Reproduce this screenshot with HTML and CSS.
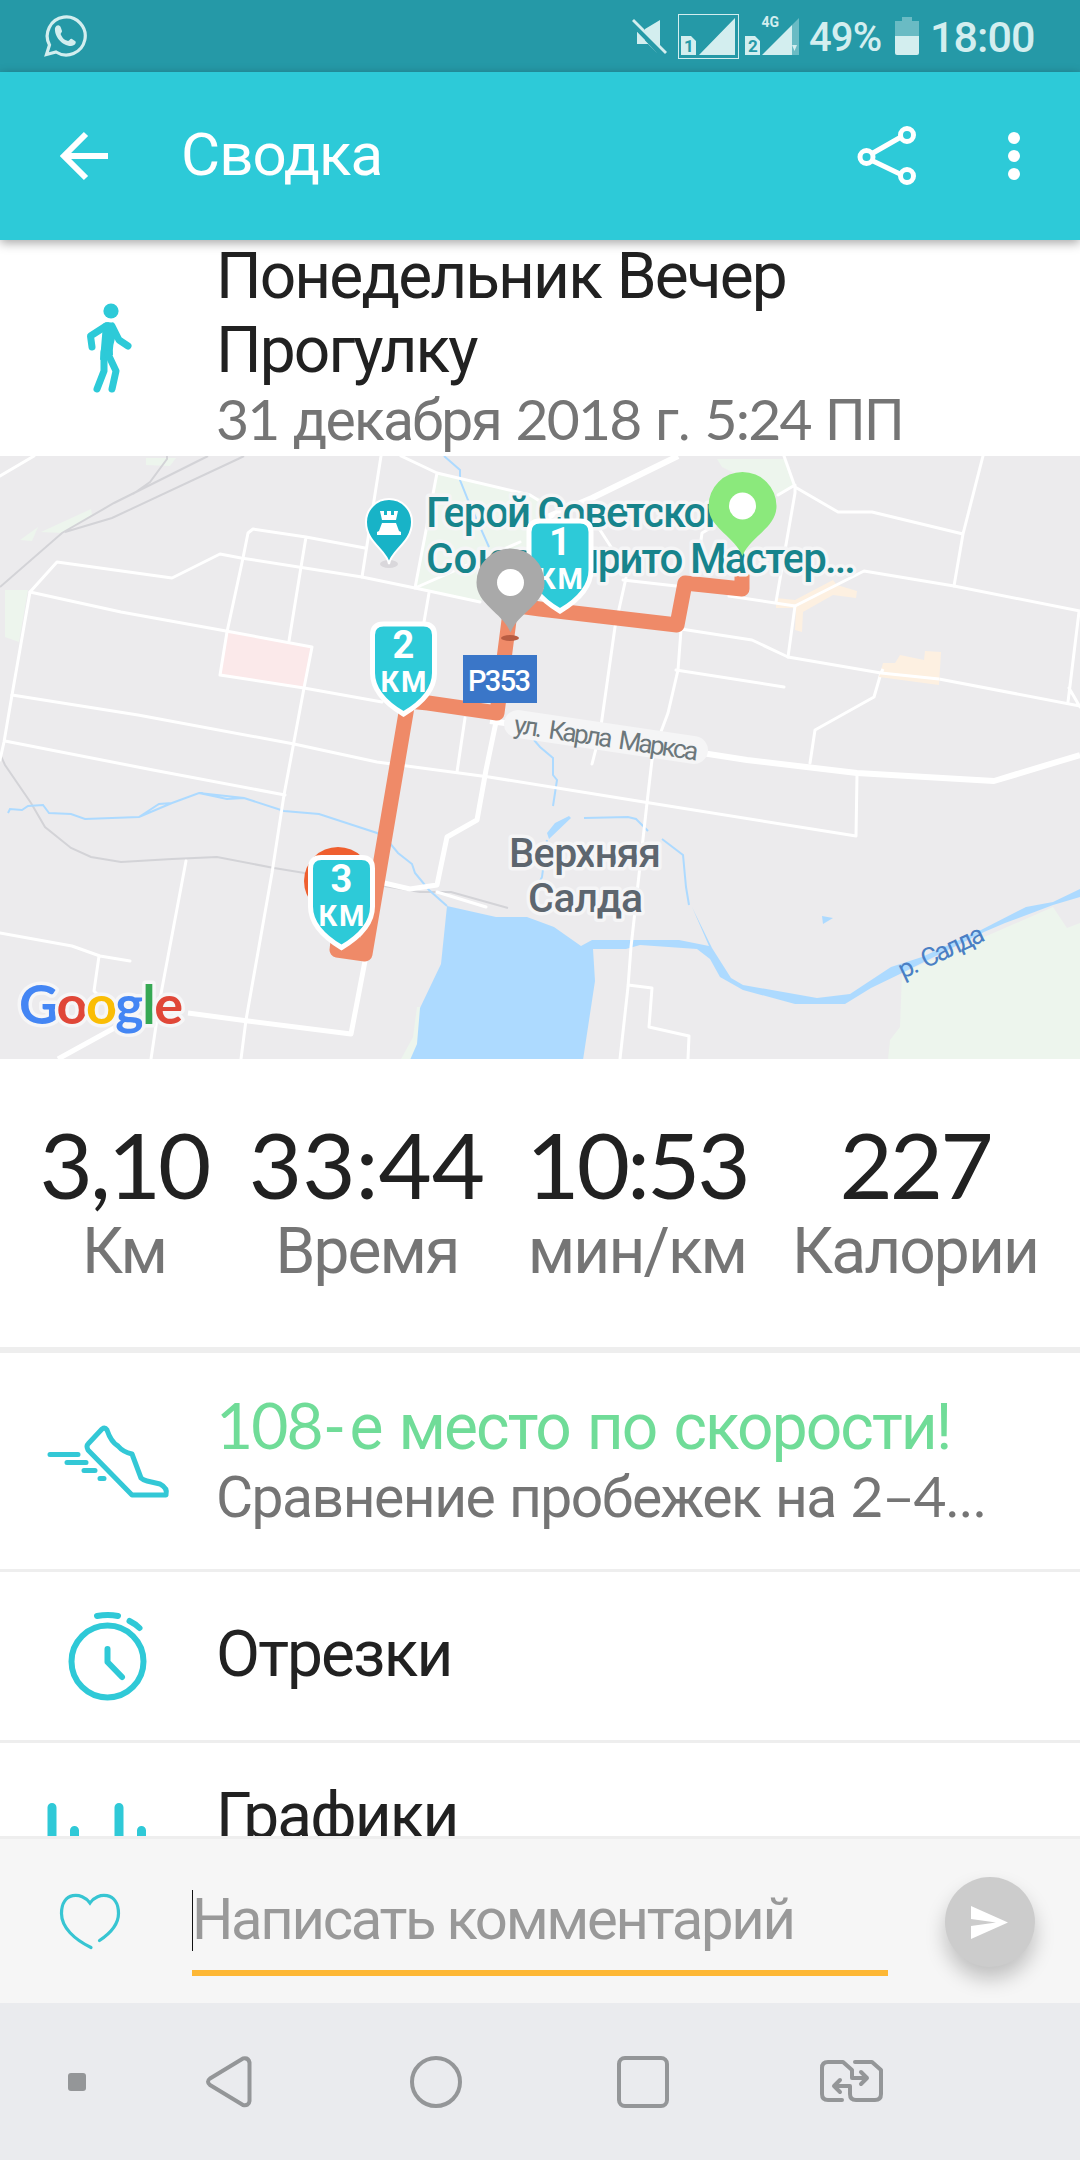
FILE: index.html
```html
<!DOCTYPE html>
<html lang="ru">
<head>
    <meta charset="UTF-8">
    <meta name="viewport" content="width=device-width, initial-scale=1.0">
    <link rel="stylesheet" href="styles.css">
    <title>Сводка</title>
</head>
<body>
    <div class="status-bar">
        <svg class="whatsapp" width="44" height="44" viewBox="0 0 44 44">
            <path d="M3.500 40.500L6.500 31A19 19 0 1 1 13 38Z" fill="none" stroke="currentColor" stroke-width="3.200"/>
            <path d="M12 14c2-4 5-3 6 0l1 3c0 2-2 2-1 4 2 4 4 5 7 6 2 0 2-3 4-2l3 2c2 1 0 5-4 5-9 0-17-10-16-18z" fill="currentColor"/>
        </svg>
        <svg class="signals" width="170" height="50" viewBox="630 10 170 50">
            <g fill="currentColor">
                <path d="M645 28l15-9v25l-15-15zM637 31l20 21-9-9h-11zM632 20l2-2 33 33-2 2z"/>
                <path d="M637 31l8 8-2 4h-6z"/>
                <path d="M681 35h10l5 5v14h-15zM699 54l36-37v37z"/>
                <path d="M745 35h10l5 5v14h-15zM762 54l30-30v30z"/>
                <path d="M792 24l7-7v37h-7z" opacity=".4"/>
                <path d="M792 44h5l-2.500 6z"/>
            </g>
            <rect x="678.500" y="13.500" width="60" height="44" fill="none" stroke="currentColor"/>
            <g class="signal-text">
                <text x="684" y="51" class="sim">1</text>
                <text x="748" y="51" class="sim">2</text>
                <text x="761.500" y="26" class="net">4G</text>
            </g>
        </svg>
        <span class="percent">49%</span>
        <svg class="battery" width="24" height="38" viewBox="0 0 24 38" fill="currentColor">
            <path d="M7 0h10v4h7v15H0V4h7z" opacity=".4"/>
            <path d="M0 19h24v17q0 2-2 2H2q-2 0-2-2z"/>
        </svg>
        <span class="clock">18:00</span>
    </div>

    <header class="app-bar">
        <svg class="back" width="50" height="50" viewBox="0 0 50 50" fill="none" stroke="#fff" stroke-width="6">
            <path d="M26 3L4 25l22 22M4 25h44"/>
        </svg>
        <h1>Сводка</h1>
        <svg class="share" width="60" height="62" viewBox="0 0 60 62" fill="none" stroke="#fff" stroke-width="5">
            <path d="M16 28l28-16M16 36l27 13"/>
            <circle cx="9.500" cy="32" r="6.500"/>
            <circle cx="50" cy="10" r="6.500"/>
            <circle cx="50" cy="51" r="6.500"/>
        </svg>
        <svg class="more" width="12" height="48" viewBox="0 0 12 48" fill="#fff">
            <circle cx="6" cy="6" r="6"/>
            <circle cx="6" cy="24" r="6"/>
            <circle cx="6" cy="42" r="6"/>
        </svg>
    </header>

    <main class="content">
        <section class="activity">
            <svg class="row-icon" width="216" height="216" viewBox="0 240 216 216">
                <circle cx="111" cy="311" r="7.600" fill="#2dcad8"/>
                <path d="M103 324q5-4 10 0l4 9q-5 12-4 22l-13 5z" fill="#2dcad8"/>
                <g fill="none" stroke="#2dcad8" stroke-width="7" stroke-linecap="round" stroke-linejoin="round">
                    <path d="M106 326l-15.500 10 1.500 11"/>
                    <path d="M112 326l7 14 9 6"/>
                    <path d="M104 352v19l-7 18"/>
                    <path d="M108 354l8 17-4 18"/>
                </g>
            </svg>
            <div>
                <h2>Понедельник Вечер<br>Прогулку</h2>
                <p class="date"><span class="num">31</span> декабря <span class="num">2018</span> г. <span class="num">5:24</span> ПП</p>
            </div>
        </section>

        <svg class="map" width="1080" height="603" viewBox="0 0 1080 603">
            <!-- parks and built-up areas -->
            <g fill="#edf5ed">
                <path d="M437 17l103 25v42l-60 62-65-14z"/>
                <path d="M5 134h23l-9 52-14-5zM146 2h30l-6 8-24-1zM20 84l18-13-6 14zM41 76l50-23 1 6-30 18z"/>
                <path d="M717 3h67l10 26-16 10-56-28z"/>
                <path d="M401 603l12-22 4-30h8v52z"/>
                <path d="M902 517l-2 54-10 13-2 19h192V467l-13 5-14-21z"/>
            </g>
            <path d="M227 176l85 15-8 41-84-13z" fill="#fbe9ea"/>
            <path d="M776 142l19 2 38-20 4 5 20 6-1 7-23-3-30 17-1 20-7-2 1-22h-20z" fill="#fdf0e1"/>

            <!-- railways -->
            <g fill="none" stroke="#d3d3d7" stroke-width="2">
                <path d="M0 131L62 77l52-30L200 4l8-4M65 76l47-14L238 3l6-3M133 38l17-12 17-23v-3"/>
                <path d="M0 298l5 11 26 38 14 24 26 21 20 9 30 5 51-3 45-2 57 11 110 18 36 6 31 0 57 16"/>
            </g>

            <!-- water -->
            <g fill="#addaff">
                <path d="M447 450l49 11h31l27 10 27 19 11-6h87l30 6-17-39-6-20 6 20 20 41 19 30 12 7 74 13 33-4 41-27 31-10 59-27 45-23 27-5 27-13v8l-27 8-48 18-21 9-82 41-31 15-26 16h-50l-52-14-23-13-10-18-13-10-57-4-14 4h-33l2 32-12 79H410l7-16 3-36 21-44z"/>
                <path d="M569 360l-14 7-8 10 2 6 22-21zM822 460l11 2-10 6z"/>
            </g>
            <g fill="none" stroke="#addaff" stroke-width="2">
                <path d="M444 0l16 14v10l8 20 21 47M534 284l6 7 13 11v17l4 5-4 26M584 362l44-1 8 2 12 12M662 383l21 16 3 32 3 18M547 384l-5 37-5 10"/>
                <path d="M8 357l2-4 12 1 6-4 15-1 6 8 22 1 14 5 54-2 33-14 27-10 45 5 40 13 35 3 58 19 12 9 9 11 14 11 3 9 14 17 18 16M139 361l20-13 13-1M199 337l28 6 17-1"/>
            </g>

            <!-- streets -->
            <g fill="none" stroke="#fff" stroke-width="3" stroke-linejoin="round" stroke-linecap="round">
                <path d="M0 20L34 0"/>
                <path d="M480 146l-65-14-53-11-121-19-21-4-48 24-115-16-27 30-18 103-8 47-4 18"/>
                <path d="M30 136l91 20 105 19 86 16-8 41-20 107-12 78-26 147-5 39"/>
                <path d="M365 92l-59-11-53-8-5 4-5 25-16 74-7 43 84 13 78 14M306 81l-5 30-12 74M381 0l-19 121"/>
                <path d="M12 239l126 20 156 29 83 18 112 15 161 26 206 33 1-61M5 285l148 29 132 25"/>
                <path d="M401 0l36 17 93 22 16 10M437 17l-22 115 105-46M429 137l-5 29"/>
                <path d="M465 262l-8 54M437 436l49 15M186 405l-26 138-9 60M0 477l72 13 28 10 30 5M99 500l-5 35 6 6"/>
                <path d="M626 122l-11 49-15 106-8 31M623 124l53 6M600 74l11 17M729 61l-27 16-2 14M729 140l66 10 69-35 90 15 126 25"/>
                <path d="M784 0l11 31 43 25h34l91 22M778 39l17-10 0 8-19 109M983 0l-20 78-9 52M795 150l-7 51"/>
                <path d="M681 173l71 11 36 17 93 16 58 6 141 27M1079 156l-11 90M1069 232l11 19M881 217l-7 24-59 33-5 33M676 214l108 17"/>
                <path d="M681 174l-3 40-10 43-9 24-7 23-5 43-16 144-3 40-8 72M628 529l24 3-3 39 40 9-1 23"/>
            </g>
            <path d="M879 221l4-14h12l5-8 24 5 1-9 16 1-2 33z" fill="#fdf0e1"/>
            <path d="M883 213l-2 4 58 6" fill="none" stroke="#fff" stroke-width="3"/>
            <g fill="none" stroke="#fff" stroke-width="6" stroke-linejoin="round">
                <path d="M592 42l86-42M545 62l47-20M490 265l50 7 162 25 45 7 110 13 137 8 86-26"/>
                <path d="M496 266l-10 48-9 50-30 17-10 48-27 4-26-6M365 505l-14 73-103-13-60-8M118 570l-60 33" stroke-width="5"/>
            </g>

            <!-- walked route -->
            <path d="M742 106v27l-57-6-8 42-137-16-29-4-14 108-69-10-20-2-43 253-28-4 3-26" fill="none" stroke="#ef8a68" stroke-width="15" stroke-linejoin="round"/>
            <path d="M336 480h24v14h-24z" fill="#ef8a68"/>
            <ellipse cx="510" cy="182" rx="9" ry="3" fill="#b85c42"/>

            <!-- labels -->
            <g class="map-label">
                <text class="poi" x="426" y="71" textLength="318">Герой Советского</text>
                <text class="poi" x="426" y="117">Союза</text>
                <text class="poi" x="566" y="117" textLength="290">ырито Мастер...</text>
                <text class="city" x="509" y="411" textLength="152">Верхняя</text>
                <text class="city" x="528" y="456" textLength="115">Салда</text>
                <path class="street-halo" d="M518 268l176 26"/>
                <text class="street" transform="translate(513 277) rotate(8.500)" textLength="186">ул. Карла Маркса</text>
                <text class="river" transform="translate(903 523) rotate(-25)" textLength="92">р. Салда</text>
            </g>
            <rect x="463" y="199" width="74" height="48" fill="#3a76c8"/>
            <text class="road-no" x="468" y="234.500" textLength="63">Р353</text>

            <ellipse cx="389" cy="108" rx="9" ry="4" fill="#d9d7db"/>
            <path d="M389 108c-2-14-23-21-23-42a23 23 0 0 1 46 0c0 21-21 28-23 42z" fill="#18b3c7" stroke="#fff" stroke-width="2"/>
            <path d="M380 55h4v4h3v-4h4v4h3v-4h4l-2 9h-14zM382 67h14l3 8 2 1v3h-24v-3l2-1z" fill="#fff"/>

            <!-- kilometre markers and pins -->
            <circle cx="338" cy="425" r="34" fill="#ef5f2f"/>
            <g transform="translate(560 62)">
                <path class="shield" d="M-20 3h40q11 0 11 11v38c0 15-9 28-31 41-22-13-31-26-31-41V14q0-11 11-11z"/>
                <text class="km-no" y="37">1</text>
                <text class="km" y="71" textLength="46">КМ</text>
            </g>
            <g transform="translate(403.500 165)">
                <path class="shield" d="M-20 3h40q11 0 11 11v38c0 15-9 28-31 41-22-13-31-26-31-41V14q0-11 11-11z"/>
                <text class="km-no" y="37">2</text>
                <text class="km" y="71" textLength="46">КМ</text>
            </g>
            <g transform="translate(341.500 398.500)">
                <path class="shield" d="M-20 3h40q11 0 11 11v38c0 15-9 28-31 41-22-13-31-26-31-41V14q0-11 11-11z"/>
                <text class="km-no" y="37">3</text>
                <text class="km" y="71" textLength="46">КМ</text>
            </g>
            <g transform="translate(510.500 126.500)">
                <path d="M0 50c-8-20-34-28-34-50a34 34 0 0 1 68 0c0 22-26 30-34 50z" fill="#a9a9a9"/>
                <circle r="13.500" fill="#fff"/>
            </g>
            <g transform="translate(742.500 50)">
                <path d="M0 50c-8-20-34-28-34-50a34 34 0 0 1 68 0c0 22-26 30-34 50z" fill="#8be97c"/>
                <circle r="13.500" fill="#fff"/>
            </g>

            <text class="google" x="19" y="568" textLength="164"><tspan fill="#4486f4">G</tspan><tspan fill="#e04738">o</tspan><tspan fill="#fabd05">o</tspan><tspan fill="#4486f4">g</tspan><tspan fill="#36a853">l</tspan><tspan fill="#e04738">e</tspan></text>
        </svg>

        <section class="stats">
            <div><b>3,10</b><span>Км</span></div>
            <div class="time"><b>33:44</b><span>Время</span></div>
            <div><b>10:53</b><span>мин/км</span></div>
            <div><b>227</b><span>Калории</span></div>
        </section>

        <section class="row ranking">
            <svg class="row-icon" width="216" height="216" viewBox="0 1353 216 216" fill="none" stroke="#33c8d6" stroke-width="5" stroke-linecap="round" stroke-linejoin="round">
                <path d="M102 1429q3-2 5 1 4 12 11 16 5 6 14 8l9 24q2 2 6 3l13 3q8 4 6 11h-34L88 1450q-2-4 0-6z"/>
                <path d="M50 1454.500h28M67 1462.500h19M84 1470.500h11M100 1478.500h4"/>
            </svg>
            <div>
                <h3><span class="num">108</span><span class="dash">-</span>е место по скорости!</h3>
                <p>Сравнение пробежек на <span class="num">2–4</span>...</p>
            </div>
        </section>

        <section class="row laps">
            <svg class="row-icon" width="216" height="168" viewBox="0 1572 216 168" fill="none" stroke="#2fc9d7" stroke-width="6" stroke-linecap="round">
                <circle cx="107.500" cy="1661.500" r="36"/>
                <path d="M107.500 1649v13l14.500 15M97 1616q11-2 21 0M129.500 1621q6 3 10 7" stroke-linejoin="round"/>
            </svg>
            <h3>Отрезки</h3>
        </section>

        <section class="row charts">
            <svg class="row-icon" width="216" height="168" viewBox="0 1743 216 168" stroke="#2fc9d7" stroke-width="9" stroke-linecap="round">
                <path d="M52 1807.500v70M74.500 1830.500v47M119 1807.500v70M141.500 1830.500v47"/>
            </svg>
            <h3>Графики</h3>
        </section>
    </main>

    <div class="comment-bar">
        <svg class="heart" width="66" height="60" viewBox="57 1892 66 60" fill="none" stroke="#37c5d2" stroke-width="3.200" stroke-linecap="round">
            <path d="M99.500 1940.500c12-8 19-17 19-27 0-22-21-22-28.500-10.500-8-11.500-28.500-11.500-28.500 10.500 0 14 13 26 29.500 34"/>
        </svg>
        <div class="field">Написать комментарий</div>
        <div class="send">
            <svg width="38" height="33" viewBox="0 0 38 33" fill="#fff">
                <path d="M0 0l37 16.500L0 33V20l25-3.500L0 13z"/>
            </svg>
        </div>
    </div>

    <nav class="nav-bar">
        <span class="dot"></span>
        <svg class="nav-back" width="48" height="54" viewBox="0 0 48 54">
            <path d="M38 3.500L5 23.500q-4 3 0 6.500l33 20q6 1 6.500-4V7.500q-1-5-6.500-4z"/>
        </svg>
        <svg class="nav-home" width="54" height="54" viewBox="0 0 54 54">
            <circle cx="27" cy="27" r="24"/>
        </svg>
        <svg class="nav-recent" width="54" height="54" viewBox="0 0 54 54">
            <rect x="3" y="3" width="48" height="48" rx="6"/>
        </svg>
        <svg class="nav-sim" width="66" height="44" viewBox="818 2060 66 44">
            <path d="M842 2100h-14q-6 0-6-6v-26q0-6 6-6h15l9 8v8h15M855 2062h17l9 8v24q0 6-6 6h-19q-6 0-6-6v-8h-14M861 2072l6 6-6 6M840 2080l-6 6 6 6"/>
        </svg>
    </nav>
</body>
</html>
```
FILE: styles.css
```css
* {
    box-sizing: border-box;
}

body {
    margin: 0;
    width: 1080px;
    height: 2160px;
    overflow: hidden;
    display: flex;
    flex-direction: column;
    font-family: 'Roboto', sans-serif;
    background-color: #fff;
    color: #212121;
}

svg {
    display: block;
    flex-shrink: 0;
}

h1, h2, h3, p {
    margin: 0;
    font-weight: 400;
}

.num {
    font-family: 'Lato', 'Roboto', sans-serif;
    line-height: 1;
}

/* status bar */
.status-bar {
    height: 72px;
    flex-shrink: 0;
    display: flex;
    align-items: center;
    padding-left: 43px;
    background-color: #2599a7;
    color: #d3eeef;
}

.signals {
    margin-left: 543px;
}

.signal-text {
    font-weight: 700;
}

.sim {
    font-size: 17px;
    fill: #2599a7;
}

.net {
    font-size: 14px;
    fill: #d3eeef;
}

.percent {
    width: 86px;
    margin: 2px 0 0 9px;
    font-size: 40px;
    font-weight: 500;
    letter-spacing: -0.9px;
}

.clock {
    margin: 2px 0 0 11px;
    font-size: 43px;
    font-weight: 500;
    letter-spacing: -0.9px;
}

/* app bar */
.app-bar {
    height: 168px;
    flex-shrink: 0;
    display: flex;
    align-items: center;
    padding-left: 60px;
    background-color: #2dcad8;
    color: #fff;
    box-shadow: 0 3px 10px rgba(0, 0, 0, 0.35);
    z-index: 1;
}

.app-bar h1 {
    width: 676px;
    margin: -3px 0 0 71px;
    font-size: 60px;
    letter-spacing: -0.9px;
}

.more {
    margin-left: 91px;
}

/* scrolling content */
.content {
    height: 1596px;
    flex-shrink: 0;
    overflow: hidden;
}

.activity {
    display: flex;
    height: 216px;
}

.activity h2 {
    font-size: 64px;
    line-height: 74px;
    letter-spacing: -1.9px;
    word-spacing: 2px;
}

.date {
    font-size: 57px;
    line-height: 66px;
    letter-spacing: -1.8px;
    word-spacing: 2px;
    color: #757575;
    white-space: nowrap;
}

/* map */
.map {
    background-color: #ecebed;
}

.map-label {
    font-weight: 500;
    paint-order: stroke;
    stroke: #f5f5f6;
    stroke-width: 7px;
    stroke-linejoin: round;
}

.poi {
    font-size: 42px;
    fill: #17848c;
}

.city {
    font-size: 41px;
    fill: #5d666f;
}

.street {
    font-size: 26px;
    font-weight: 400;
    word-spacing: 5px;
    fill: #6c777b;
    stroke: none;
}

.street-halo {
    stroke-width: 28px;
    stroke-linecap: round;
}

.river {
    font-size: 26px;
    font-weight: 400;
    word-spacing: 4px;
    fill: #4a7fc4;
    stroke: none;
}

.road-no {
    font-size: 29px;
    font-weight: 500;
    fill: #fff;
}

.shield {
    fill: #2dcad8;
    stroke: #fff;
    stroke-width: 5px;
}

.km-no, .km {
    fill: #fff;
    text-anchor: middle;
    font-weight: 700;
}

.km-no {
    font-size: 38px;
}

.km {
    font-size: 29px;
}

.google {
    font-family: 'Lato', sans-serif;
    font-size: 54px;
    font-weight: 700;
    paint-order: stroke;
    stroke: #f6f6f7;
    stroke-width: 7px;
    stroke-linejoin: round;
}

/* totals */
.stats {
    height: 294px;
    display: grid;
    grid-template-columns: 218px 268px 272px 284px;
    padding: 55px 23px 0 15px;
    border-bottom: 6px solid #eee;
    text-align: center;
    white-space: nowrap;
}

.stats b {
    display: block;
    font-family: 'Lato', 'Roboto', sans-serif;
    font-size: 92px;
    font-weight: 400;
    line-height: 100px;
    letter-spacing: -3px;
}

.stats .time b {
    letter-spacing: 0;
}

.stats span {
    display: block;
    font-size: 64px;
    line-height: 76px;
    letter-spacing: -1.9px;
    color: #757575;
}

/* list rows */
.row {
    display: flex;
    border-bottom: 3px solid #eee;
    white-space: nowrap;
}

.row h3 {
    font-size: 64px;
    line-height: 74px;
    letter-spacing: -1.9px;
    word-spacing: 3px;
}

.dash {
    margin: 0 8px 0 4px;
}

.ranking {
    height: 219px;
}

.ranking h3 {
    margin-top: 38px;
    color: #70dc98;
}

.ranking p {
    font-size: 57px;
    line-height: 66px;
    letter-spacing: -1.5px;
    word-spacing: 2px;
    color: #757575;
}

.laps {
    height: 171px;
}

.laps h3 {
    margin-top: 46px;
}

.charts h3 {
    margin-top: 37px;
}

/* comment bar */
.comment-bar {
    height: 167px;
    flex-shrink: 0;
    display: flex;
    border-top: 3px solid #eee;
    padding-left: 57px;
    background-color: #f6f6f6;
}

.heart {
    margin-top: 53px;
}

.field {
    width: 696px;
    height: 86px;
    margin: 51px 0 0 69px;
    border-bottom: 6px solid #fdb735;
    font-size: 58px;
    line-height: 59px;
    letter-spacing: -2.3px;
    color: #999;
    white-space: nowrap;
}

/* text cursor */
.field::before {
    content: '';
    display: inline-block;
    width: 1px;
    height: 61px;
    margin-right: -1px;
    background-color: #111;
    vertical-align: top;
}

.send {
    width: 90px;
    height: 90px;
    margin: 38px 0 0 57px;
    border-radius: 50%;
    display: flex;
    align-items: center;
    justify-content: center;
    background-color: #ccc;
    box-shadow: 0 12px 20px rgba(0, 0, 0, 0.22);
}

/* navigation bar */
.nav-bar {
    height: 157px;
    flex-shrink: 0;
    display: flex;
    align-items: center;
    padding-left: 68px;
    background-color: #eaebee;
}

.nav-bar svg {
    fill: none;
    stroke: #949698;
    stroke-width: 4px;
    stroke-linecap: round;
    stroke-linejoin: round;
}

.dot {
    width: 18px;
    height: 18px;
    border-radius: 3px;
    background-color: #949698;
}

.nav-back {
    margin-left: 119px;
}

.nav-home {
    margin-left: 156px;
}

.nav-recent {
    margin-left: 153px;
}

.nav-sim {
    margin-left: 148px;
}
```
